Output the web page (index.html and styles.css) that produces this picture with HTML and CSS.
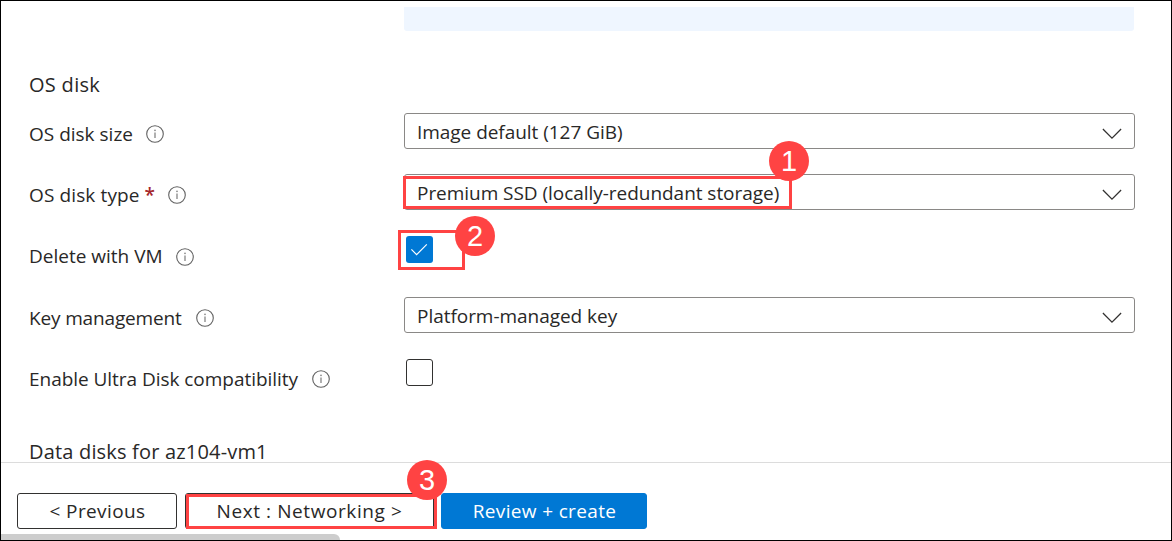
FILE: index.html
```
<!DOCTYPE html>
<html lang="en">
<head>
<meta charset="utf-8">
<title>Create a virtual machine - Disks</title>
<link rel="stylesheet" href="styles.css">
</head>
<body>
<svg class="defs" width="0" height="0">
  <symbol id="info" viewBox="0 0 18 18">
    <circle cx="9" cy="9" r="8.3" fill="none" stroke="#616161" stroke-width="1.1"/>
    <path d="M9 7.4V13" stroke="#858585" stroke-width="1.3"/>
    <circle cx="9" cy="5.3" r=".85" fill="#858585"/>
  </symbol>
  <symbol id="chevron" viewBox="0 0 20 12">
    <path d="M.9 1L10 10.1 19.1 1" fill="none" stroke="#323130" stroke-width="1.25"/>
  </symbol>
</svg>
<div class="frame">
  <main class="content">
    <div class="notice"></div>
    <h2 class="heading heading-os">OS disk</h2>
    <div class="row">
      <div class="label"><span>OS disk size</span><svg class="info"><use href="#info"/></svg></div>
      <div class="select"><span>Image default (127 GiB)</span><svg class="chevron"><use href="#chevron"/></svg></div>
    </div>
    <div class="row">
      <div class="label label-type"><span>OS disk type</span><b class="required">*</b><svg class="info"><use href="#info"/></svg></div>
      <div class="select"><span>Premium SSD (locally-redundant storage)</span><svg class="chevron"><use href="#chevron"/></svg></div>
    </div>
    <div class="row row-tall">
      <div class="label label-delete"><span>Delete with VM</span><svg class="info"><use href="#info"/></svg></div>
      <div class="check checked"><svg viewBox="0 0 27 27"><path d="M5.4 13.4L10.6 18.6 20.8 8.3" fill="none" stroke="#fff" stroke-width="1.2"/></svg></div>
    </div>
    <div class="row">
      <div class="label label-key"><span>Key management</span><svg class="info"><use href="#info"/></svg></div>
      <div class="select select-key"><span>Platform-managed key</span><svg class="chevron"><use href="#chevron"/></svg></div>
    </div>
    <div class="row">
      <div class="label label-ultra"><span>Enable Ultra Disk compatibility</span><svg class="info"><use href="#info"/></svg></div>
      <div class="check"></div>
    </div>
    <h2 class="heading heading-data">Data disks for az104-vm1</h2>
  </main>
  <footer class="footer">
    <div class="buttons">
      <div class="button previous">&lt; Previous</div>
      <div class="button next">Next : Networking &gt;</div>
      <div class="button primary">Review + create</div>
    </div>
    <div class="scrollbar"></div>
  </footer>
  <div class="outline outline-1"></div>
  <div class="outline outline-2"></div>
  <div class="outline outline-3"></div>
  <div class="badge badge-1">1</div>
  <div class="badge badge-2">2</div>
  <div class="badge badge-3">3</div>
</div>
</body>
</html>
```
FILE: styles.css
```
* { box-sizing: border-box; }
body {
  margin: 0;
  background: #fff;
  color: #292827;
  font: 19px/36px "Open Sans", "Noto Sans", sans-serif;
  white-space: nowrap;
}
.defs { position: absolute; }
.frame {
  position: relative;
  display: flex;
  flex-direction: column;
  width: 1172px;
  height: 541px;
  border: 1px solid #000;
  overflow: hidden;
}
.content {
  height: 461px;
  padding: 6px 36px 0 28px;
}
.notice {
  height: 24px;
  margin-left: 375px;
  margin-right: 1px;
  background: #eff6ff;
  border-radius: 0 0 3px 3px;
}
.heading {
  margin: 0;
  font-size: 20px;
  font-weight: 400;
  line-height: 36px;
}
.heading-os {
  height: 46px;
  margin-top: 36px;
  letter-spacing: .3px;
}
.heading-data {
  margin-top: 23px;
  line-height: 20px;
  letter-spacing: .18px;
}
.row {
  display: grid;
  grid-template-columns: 375px 1fr;
  align-items: start;
  height: 61px;
}
.row-tall { height: 62px; }
.label {
  display: flex;
  padding-top: 3px;
}
.label-type { letter-spacing: .12px; }
.label-delete { letter-spacing: 0; }
.label-key { letter-spacing: -.15px; }
.label-ultra { letter-spacing: -.04px; }
.required {
  margin-left: 5px;
  color: #a4262c;
  font-weight: 600;
}
.info {
  flex: none;
  width: 18px;
  height: 18px;
  margin: 9px 0 0 13px;
}
.label-delete .info { margin-top: 10px; }
.label-key .info { margin-left: 14px; }
.label-ultra .info { margin-left: 14px; }
.select {
  display: flex;
  justify-content: space-between;
  height: 36px;
  padding: 0 12px;
  border: 1px solid #8a8886;
  border-radius: 3px;
  letter-spacing: -.04px;
}
.chevron {
  width: 20px;
  height: 12px;
  margin-top: 13.5px;
}
.check {
  width: 27px;
  height: 27px;
  margin: 1px 0 0 2px;
  border: 1px solid #323130;
  border-radius: 3px;
}
.checked {
  border: 0;
  background: #0078d4;
}
.checked svg { display: block; }
.footer {
  display: flex;
  flex-direction: column;
  justify-content: space-between;
  height: 78px;
  padding-top: 30px;
  border-top: 1px solid #dcdcdc;
}
.buttons {
  display: flex;
  padding-left: 16px;
}
.button {
  height: 36px;
  border: 1px solid #323130;
  border-radius: 3px;
  line-height: 34px;
  text-align: center;
}
.previous {
  width: 160px;
  margin-right: 8px;
  padding-left: 1px;
  letter-spacing: .4px;
}
.next {
  width: 249px;
  margin-right: 7px;
  letter-spacing: .58px;
}
.primary {
  width: 206px;
  padding-left: 1px;
  border-color: #0078d4;
  background: #0078d4;
  color: #fff;
  letter-spacing: .35px;
}
.scrollbar {
  width: 339px;
  height: 6px;
  background: #cdcdcd;
  border-radius: 0 6px 0 0;
}
/* Step annotations drawn over the form */
.outline {
  position: absolute;
  border: 3px solid #ff4343;
}
.outline-1 { left: 402px; top: 175px; width: 389px; height: 33px; }
.outline-2 { left: 397px; top: 229px; width: 67px; height: 40px; }
.outline-3 { left: 185px; top: 493px; width: 251px; height: 35px; }
.badge {
  position: absolute;
  width: 40px;
  height: 40px;
  border-radius: 50%;
  background: #ff4343;
  color: #fff;
  font: 29px/41px "Liberation Sans", Arial, sans-serif;
  text-align: center;
}
.badge-1 { left: 768px; top: 140px; }
.badge-2 { left: 454px; top: 215px; }
.badge-3 { left: 406px; top: 459px; }
```
